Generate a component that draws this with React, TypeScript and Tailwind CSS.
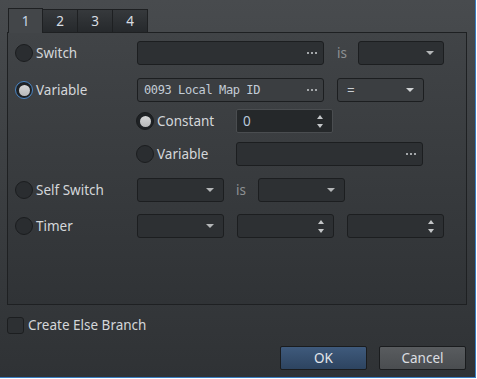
import React from 'react'

function Radio({ checked, focus }: { checked?: boolean; focus?: boolean }) {
  if (checked) {
    return (
      <div
        className={`flex h-[18px] w-[18px] shrink-0 items-center justify-center rounded-full border-[1.5px] ${
          focus ? 'border-[#4a86c6]' : 'border-[#1a1c1e]'
        } bg-[#1f2225]`}
      >
        <div className="h-[11px] w-[11px] rounded-full bg-gradient-to-b from-[#d6d7d8] to-[#b8b9ba]" />
      </div>
    )
  }
  return (
    <div className="h-[18px] w-[18px] shrink-0 rounded-full border border-[#1b1d1f] bg-[#2a2d30]" />
  )
}

function Dots() {
  return (
    <div className="mr-[6px] flex gap-[2px]">
      <div className="h-[2px] w-[2px] bg-[#a4a7aa]" />
      <div className="h-[2px] w-[2px] bg-[#a4a7aa]" />
      <div className="h-[2px] w-[2px] bg-[#a4a7aa]" />
    </div>
  )
}

function Arrows() {
  return (
    <div className="mr-[9px] flex flex-col gap-[5px]">
      <div className="h-0 w-0 border-x-[3.5px] border-b-[4px] border-x-transparent border-b-[#c4c6c8]" />
      <div className="h-0 w-0 border-x-[3.5px] border-t-[4px] border-x-transparent border-t-[#c4c6c8]" />
    </div>
  )
}

function Field({
  w,
  text,
  enabled,
  dots,
  arrow,
  spin,
  className = '',
}: {
  w: string
  text?: string
  enabled?: boolean
  dots?: boolean
  arrow?: boolean
  spin?: boolean
  className?: string
}) {
  return (
    <div
      className={`flex h-[24px] shrink-0 items-center rounded-[3px] border border-[#1c1e20] ${
        enabled ? 'bg-[#3b3e41]' : 'bg-[#2d3033]'
      } ${w} ${className}`}
    >
      <div className="flex-1 truncate pl-[6px] font-['DejaVu_Sans_Mono',monospace] text-[12px] tracking-[-0.4px] text-[#c3ccd6]">
        {text}
      </div>
      {dots && <Dots />}
      {arrow && (
        <div className="mr-[9px] h-0 w-0 border-x-[4px] border-t-[4px] border-x-transparent border-t-[#b4b6b8]" />
      )}
      {spin && <Arrows />}
    </div>
  )
}

function SpinBox({ w, value }: { w: string; value?: string }) {
  return (
    <div className={`flex h-[24px] shrink-0 items-center rounded-[2px] border border-[#4a4d50] bg-[#25282a] ${w}`}>
      <div className="flex-1 pl-[6px] text-[13.5px] text-[#b9cadb]">{value}</div>
      <Arrows />
    </div>
  )
}

function Label({ children }: { children: React.ReactNode }) {
  return <span className="ml-[3px] text-[13.5px] text-[#d4d7da]">{children}</span>
}

export default function App() {
  const tabs = ['1', '2', '3', '4']

  return (
    <div className="h-[379px] w-[477px] font-['Noto_Sans',sans-serif]">
      <div className="flex h-[378px] w-[476px] flex-col border-b border-r border-[#3a7cc0] bg-gradient-to-b from-[#484b4e] to-[#2f3235] pl-[7px] pt-[8px]">
        {/* tabs */}
        <div className="flex h-[24px] items-end pl-[1px]">
          {tabs.map((t, i) =>
            i === 0 ? (
              <div
                key={t}
                className="relative z-10 -mb-px flex h-[25px] w-[35px] items-center justify-center border border-b-0 border-[#1e2022] bg-[#434649] text-[13.5px] text-[#c6d6e6]"
              >
                {t}
              </div>
            ) : (
              <div
                key={t}
                className="flex h-[23px] w-[35px] items-center justify-center border border-l-0 border-b-0 border-[#1e2022] bg-gradient-to-b from-[#36393c] to-[#26292c] text-[13.5px] text-[#d8dde2]"
              >
                {t}
              </div>
            )
          )}
        </div>

        {/* panel */}
        <div className="flex h-[273px] w-[460px] flex-col border border-[#1e2022] bg-gradient-to-b from-[#414447] to-[#303336] pl-[7px] pt-[8px]">
          {/* Switch */}
          <div className="flex h-[24px] items-center">
            <div className="flex w-[122px] items-center">
              <Radio />
              <Label>Switch</Label>
            </div>
            <Field w="w-[187px]" dots />
            <span className="ml-[13px] w-[21px] text-[13.5px] text-[#8e9194]">is</span>
            <Field w="w-[86px]" arrow />
          </div>

          {/* Variable */}
          <div className="mt-[13px] flex h-[24px] items-center">
            <div className="flex w-[122px] items-center">
              <Radio checked focus />
              <Label>Variable</Label>
            </div>
            <Field w="w-[187px]" text="0093 Local Map ID" enabled dots />
            <div className="ml-[13px] flex h-[24px] w-[87px] items-center rounded-[3px] border border-[#1c1e20] bg-[#3b3e41]">
              <span className="flex-1 pl-[9px] text-[13.5px] text-[#c8cdd2]">=</span>
              <div className="mr-[9px] h-0 w-0 border-x-[4px] border-t-[4px] border-x-transparent border-t-[#d0d2d4]" />
            </div>
          </div>

          {/* Constant */}
          <div className="mt-[7px] flex h-[24px] items-center pl-[121px]">
            <div className="flex w-[100px] items-center">
              <Radio checked />
              <Label>Constant</Label>
            </div>
            <SpinBox w="w-[97px]" value="0" />
          </div>

          {/* Variable sub */}
          <div className="mt-[9px] flex h-[24px] items-center pl-[121px]">
            <div className="flex w-[100px] items-center">
              <Radio />
              <Label>Variable</Label>
            </div>
            <Field w="w-[187px]" dots />
          </div>

          {/* Self Switch */}
          <div className="mt-[12px] flex h-[24px] items-center">
            <div className="flex w-[122px] items-center">
              <Radio />
              <Label>Self Switch</Label>
            </div>
            <Field w="w-[87px]" arrow />
            <span className="ml-[12px] w-[22px] text-[13.5px] text-[#8e9194]">is</span>
            <Field w="w-[87px]" arrow />
          </div>

          {/* Timer */}
          <div className="mt-[12px] flex h-[24px] items-center">
            <div className="flex w-[122px] items-center">
              <Radio />
              <Label>Timer</Label>
            </div>
            <Field w="w-[87px]" arrow />
            <Field w="w-[97px]" spin className="ml-[13px]" />
            <Field w="w-[97px]" spin className="ml-[13px]" />
          </div>
        </div>

        {/* else branch */}
        <div className="mt-[10px] flex items-center">
          <div className="h-[17px] w-[17px] rounded-[3px] border border-[#1c1e20] bg-[#2d3033]" />
          <span className="ml-[4px] text-[13.5px] text-[#d4d7da]">Create Else Branch</span>
        </div>

        {/* buttons */}
        <div className="mt-[11px] flex justify-end gap-[12px] pr-[9px]">
          <button className="h-[24px] w-[87px] rounded-[2px] border border-[#1a1c1e] bg-gradient-to-b from-[#3f5a7c] to-[#2d4460] text-[13.5px] text-[#e2e6ea]">
            OK
          </button>
          <button className="h-[24px] w-[87px] rounded-[2px] border border-[#1a1c1e] bg-gradient-to-b from-[#595c5f] to-[#4a4d50] text-[13.5px] text-[#dcdfe2]">
            Cancel
          </button>
        </div>
      </div>
    </div>
  )
}
